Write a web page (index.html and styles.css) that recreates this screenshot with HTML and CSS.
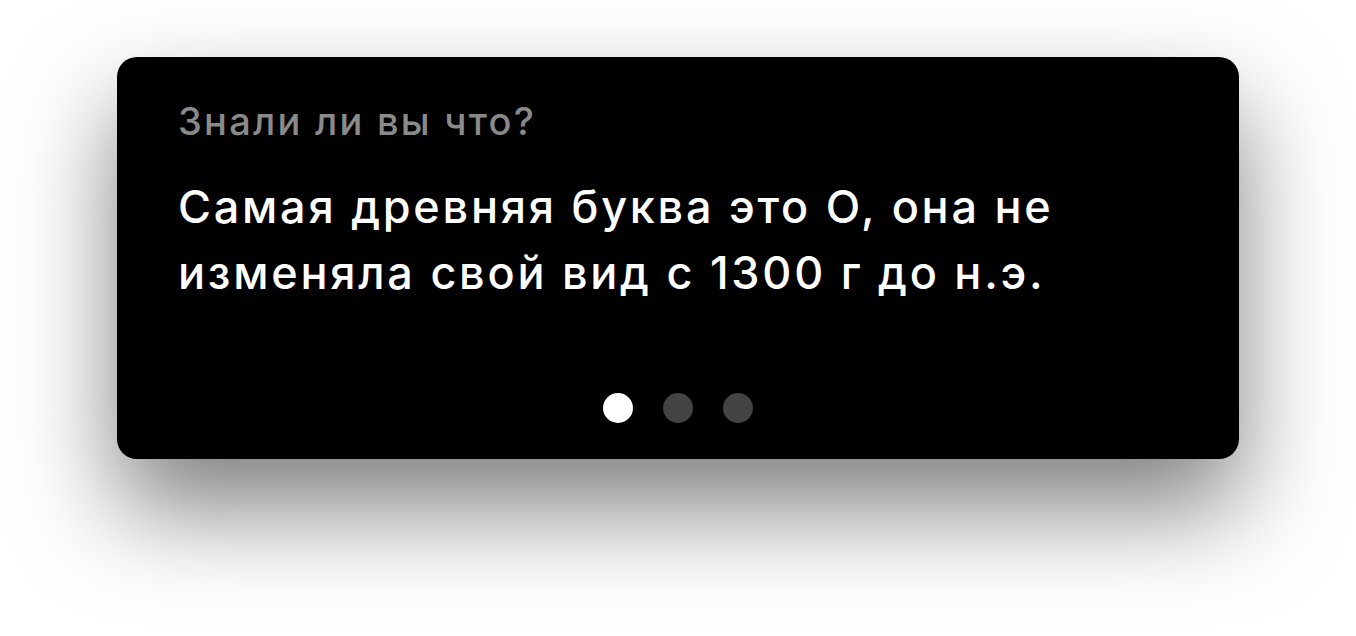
FILE: index.html
```html
<!DOCTYPE html>
<html lang="ru">
<head>
<meta charset="utf-8">
<title>Знали ли вы что?</title>
<link rel="stylesheet" href="styles.css">
</head>
<body>
<div class="page">
  <section class="card">
    <h2 class="card-title">Знали ли вы что?</h2>
    <p class="card-text">Самая древняя буква это О, она не изменяла свой вид с 1300 г до н.э.</p>
    <div class="dots">
      <span class="dot dot-active"></span>
      <span class="dot"></span>
      <span class="dot"></span>
    </div>
  </section>
</div>
</body>
</html>
```

FILE: styles.css
```css
html, body {
  margin: 0;
  padding: 0;
  background: #ffffff;
}

.page {
  box-sizing: border-box;
  min-height: 636px;
  padding: 57px 0 0 117px;
  overflow: hidden;
}

.card {
  box-sizing: border-box;
  width: 1122px;
  height: 402px;
  background: #000000;
  border-radius: 20px;
  box-shadow: 0 50px 100px rgba(0, 0, 0, 0.5);
  padding: 41px 61px 0 61px;
  display: flex;
  flex-direction: column;
  font-family: Inter, "Noto Sans", sans-serif;
}

.card-title {
  margin: 0;
  font-size: 38px;
  line-height: 46px;
  font-weight: 500;
  letter-spacing: 2.25px;
  color: #8a8a8a;
}

.card-text {
  margin: 30px 0 0 0;
  width: 930px;
  font-size: 45px;
  line-height: 66px;
  font-weight: 500;
  letter-spacing: 2.75px;
  color: #ffffff;
}

.dots {
  margin-top: auto;
  margin-bottom: 36px;
  display: flex;
  justify-content: center;
  gap: 30px;
}

.dot {
  width: 30px;
  height: 30px;
  border-radius: 50%;
  background: #444444;
}

.dot-active {
  background: #ffffff;
}
```
